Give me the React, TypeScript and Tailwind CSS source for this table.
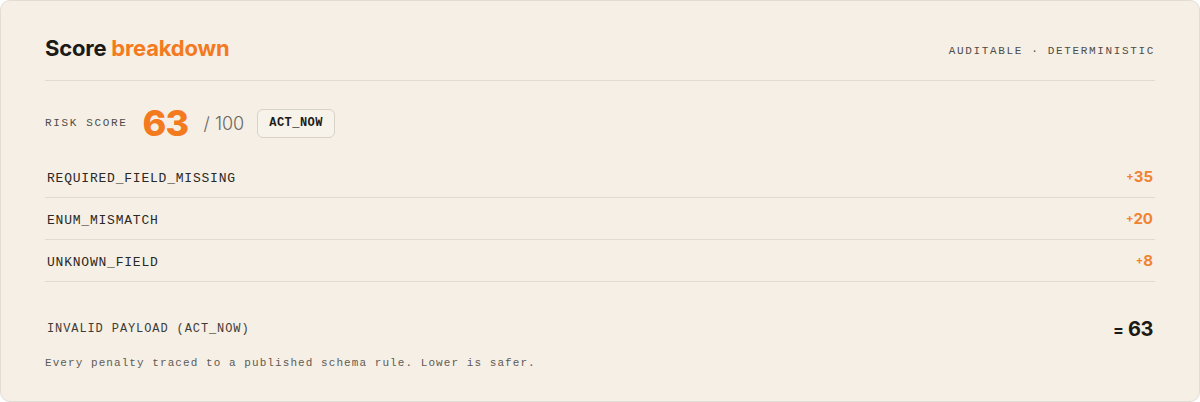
const rows = [
  { code: "REQUIRED_FIELD_MISSING", pts: 35 },
  { code: "ENUM_MISMATCH", pts: 20 },
  { code: "UNKNOWN_FIELD", pts: 8 },
];

const mono = "font-['Liberation_Mono',monospace]";
const sans = "font-['Inter',sans-serif]";

export default function App() {
  return (
    <div className="w-[1200px] h-[402px] bg-white">
      <div className="h-full rounded-[10px] border border-[#e2ddd4] bg-[#f5efe6] px-[44px] pt-[33px]">
        {/* header */}
        <div className="flex h-[28px] items-center justify-between">
          <h2 className={`${sans} text-[22px] font-bold tracking-[-0.01em] text-[#1c1a17]`}>
            Score <span className="text-[#f47a1f]">breakdown</span>
          </h2>
          <span className={`${mono} pt-[6px] text-[11px] tracking-[0.15em] text-[#4f4c47]`}>
            AUDITABLE · DETERMINISTIC
          </span>
        </div>
        <div className="mt-[18px] border-b border-[#e0dad0]" />

        {/* risk score */}
        <div className="flex h-[34px] items-center mt-[25px] mb-[16px]">
          <span className={`${mono} text-[11px] tracking-[0.15em] text-[#4f4c47]`}>RISK SCORE</span>
          <span className={`${sans} ml-[15px] text-[36px] font-extrabold leading-none tracking-[-0.02em] text-[#f47a1f]`}>
            63
          </span>
          <span className={`${sans} ml-[15px] text-[18px] font-light text-[#6b6760]`}>/ 100</span>
          <span
            className={`${mono} ml-[13px] flex h-[29px] items-center rounded-[6px] border border-[#d8d2c7] bg-[#f7f2ea] px-[11px] text-[12px] font-bold tracking-[0.04em] text-[#1c1a17]`}
          >
            ACT_NOW
          </span>
        </div>

        {/* penalties */}
        <div>
          {rows.map((r) => (
            <div
              key={r.code}
              className="flex h-[42px] items-center justify-between border-b border-[#e0dad0] px-[2px] pt-[2px]"
            >
              <span className={`${mono} pt-[2px] text-[13px] tracking-[0.06em] text-[#2b2925]`}>{r.code}</span>
              <span className={`${sans} text-[15px] font-bold text-[#f08332]`}>
                <span className="text-[11px] align-[2px]">+</span>
                {r.pts}
              </span>
            </div>
          ))}
        </div>

        {/* total */}
        <div className="mt-[33px] flex h-[28px] items-center justify-between px-[2px]">
          <span className={`${mono} text-[12px] tracking-[0.075em] text-[#3f3c37]`}>
            INVALID PAYLOAD (ACT_NOW)
          </span>
          <span className={`${sans} text-[20px] font-bold tracking-[-0.02em] text-[#1c1a17]`}>
            <span className="text-[16px]">=</span> 63
          </span>
        </div>

        <p className={`${mono} mt-[12px] text-[11px] leading-[16px] tracking-[0.097em] text-[#5f5b55]`}>
          Every penalty traced to a published schema rule. Lower is safer.
        </p>
      </div>
    </div>
  );
}
